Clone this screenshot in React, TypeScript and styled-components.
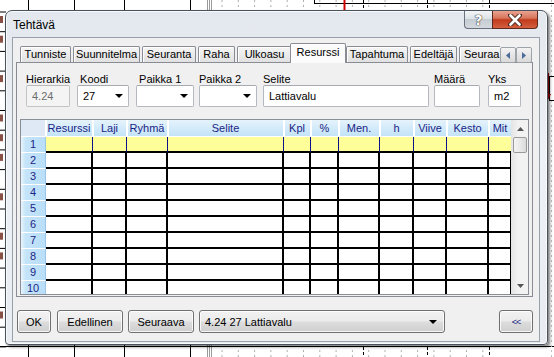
import React from 'react';
import styled, { createGlobalStyle } from 'styled-components';

const GlobalStyle = createGlobalStyle`
  html, body {
    margin: 0;
    padding: 0;
  }
  body {
    width: 554px;
    height: 357px;
    overflow: hidden;
    font-family: "Liberation Sans", Arial, sans-serif;
    font-size: 11px;
    color: #000;
  }
`;

const Desktop = styled.div`
  position: relative;
  width: 554px;
  height: 357px;
  background: #fff;
  overflow: hidden;
`;

const Backdrop = styled.svg`
  position: absolute;
  left: 0;
  top: 0;
`;

const Window = styled.div`
  position: absolute;
  left: 5px;
  top: 10px;
  width: 543px;
  height: 335px;
  box-sizing: border-box;
  border: 1px solid #4a525b;
  border-radius: 7px 7px 4px 4px;
  background: linear-gradient(180deg, #e3e8ee 0%, #eef1f5 45%, #e8ecf1 100%);
  box-shadow: 2px 2px 3px rgba(0, 0, 0, 0.5), inset 0 0 0 1px rgba(255, 255, 255, 0.75);
  padding: 0 7px 2px 6px;
  display: flex;
  flex-direction: column;
`;

const TitleBar = styled.div`
  height: 26px;
  display: flex;
  align-items: flex-start;
`;

const Title = styled.div`
  flex: 1;
  padding: 7px 0 0 1px;
  font-size: 12px;
  line-height: 14px;
`;

const CaptionButtons = styled.div`
  display: flex;
  margin-right: 2px;
`;

const HelpButton = styled.div`
  width: 28px;
  height: 18px;
  box-sizing: border-box;
  border: 1px solid #68717c;
  border-top: none;
  border-right: none;
  border-radius: 0 0 0 4px;
  background: linear-gradient(180deg, #f3f5f7 0%, #dde2e7 45%, #c6ccd3 50%, #d4d9df 100%);
  display: flex;
  align-items: center;
  justify-content: center;
  font: bold 14px "DejaVu Sans", sans-serif;
  color: #fff;
  text-shadow: 0 0 1px #444, 0 0 1px #444, 0 0 1px #444;
`;

const CloseButton = styled.div`
  width: 46px;
  height: 18px;
  box-sizing: border-box;
  border: 1px solid #5e2a1f;
  border-top: none;
  border-radius: 0 0 4px 0;
  background: linear-gradient(180deg, #e9a28f 0%, #d7765c 42%, #c23a1d 52%, #d3603f 100%);
  display: flex;
  align-items: center;
  justify-content: center;
`;

const Client = styled.div`
  flex: 1;
  border: 1px solid #98a1ab;
  background: #f0f0f0;
  display: flex;
  flex-direction: column;
  padding: 5px 6px 0 3px;
`;

const TabStrip = styled.div`
  display: flex;
  height: 20px;
  margin-left: 4px;
  position: relative;
  z-index: 1;
`;

const TabViewport = styled.div`
  width: 480px;
  height: 20px;
  overflow: hidden;
  display: flex;
  align-items: flex-start;
`;

const Tab = styled.div<{ $w: number; $ml: number; $active?: boolean; $clipped?: boolean }>`
  flex: 0 0 ${(p) => p.$w}px;
  margin-left: ${(p) => p.$ml}px;
  box-sizing: border-box;
  height: ${(p) => (p.$active ? 20 : 16)}px;
  margin-top: ${(p) => (p.$active ? 0 : 3)}px;
  border: 1px solid #898c95;
  border-bottom: none;
  border-radius: 2px 2px 0 0;
  background: ${(p) =>
    p.$active ? '#fbfbfb' : 'linear-gradient(180deg, #f6f6f6 0%, #ebebeb 50%, #e1e1e1 100%)'};
  box-shadow: inset 1px 1px 0 #fff;
  text-align: ${(p) => (p.$clipped ? 'left' : 'center')};
  padding-left: ${(p) => (p.$clipped ? 4 : 0)}px;
  line-height: ${(p) => (p.$active ? 17 : 15)}px;
  white-space: nowrap;
  position: relative;
  z-index: ${(p) => (p.$active ? 2 : 1)};
`;

const TabArrows = styled.div`
  display: flex;
  margin-top: 4px;
`;

const ArrowButton = styled.div`
  width: 16px;
  height: 16px;
  box-sizing: border-box;
  border: 1px solid #9ea3a9;
  border-radius: 2px;
  background: linear-gradient(180deg, #f4f4f4 0%, #e6e6e6 50%, #dadada 100%);
  display: flex;
  align-items: center;
  justify-content: center;
`;

const Panel = styled.div`
  margin-top: -1px;
  width: 517px;
  height: 235px;
  box-sizing: border-box;
  border: 1px solid #898c95;
  background: #f0f0f0;
  display: flex;
  flex-direction: column;
  padding: 10px 0 0 3px;
`;

const FieldsRow = styled.div`
  display: flex;
  margin-left: 6px;
`;

const Field = styled.div<{ $w: number; $ml: number }>`
  width: ${(p) => p.$w}px;
  margin-left: ${(p) => p.$ml}px;
  display: flex;
  flex-direction: column;
`;

const Label = styled.div`
  height: 12px;
  line-height: 12px;
  white-space: nowrap;
`;

const Box = styled.div<{ $disabled?: boolean }>`
  height: 22px;
  box-sizing: border-box;
  border: 1px solid ${(p) => (p.$disabled ? '#c4c4c4' : '#b5b8bf')};
  border-top-color: ${(p) => (p.$disabled ? '#b9b9b9' : '#a6a9b0')};
  border-radius: 2px;
  background: ${(p) => (p.$disabled ? '#f4f4f4' : '#fff')};
  color: ${(p) => (p.$disabled ? '#6d6d6d' : '#000')};
  padding: 0 5px;
  line-height: 20px;
  display: flex;
  align-items: center;
  justify-content: space-between;
`;

const DownTriangle = styled.span`
  width: 0;
  height: 0;
  border-left: 4px solid transparent;
  border-right: 4px solid transparent;
  border-top: 4px solid #000;
`;

const GridBox = styled.div`
  margin-top: 12px;
  width: 509px;
  height: 176px;
  box-sizing: border-box;
  border: 1px solid #8a8f97;
  display: flex;
  background: #fff;
`;

const GridTable = styled.div`
  width: 491px;
  height: 174px;
  overflow: hidden;
  display: grid;
  grid-template-columns: 25px 47px 34px 41px 116px 27px 28px 41px 34px 33px 42px 23px;
  grid-auto-rows: 16px;
  grid-template-rows: 17px;
`;

const CornerCell = styled.div`
  background: #dfe9f5;
  border-right: 1px solid #fff;
  border-bottom: 1px solid #fff;
`;

const HeadCell = styled.div`
  background: linear-gradient(180deg, #e6f3fc 0%, #d3ebfa 50%, #c4e3f8 100%);
  border-right: 1px solid #fff;
  border-bottom: 1px solid #fff;
  box-shadow: inset 1px 0 0 #fff;
  color: #1b2585;
  text-align: center;
  line-height: 16px;
  white-space: nowrap;
  overflow: hidden;
`;

const RowHead = styled.div`
  background: linear-gradient(90deg, #e8f5fd 0%, #c4e4f9 20%, #b9def8 100%);
  border-bottom: 1px solid #fff;
  border-right: 1px solid #9cc6e6;
  color: #1b2585;
  text-align: center;
  line-height: 15px;
`;

const Cell = styled.div<{ $current?: boolean }>`
  box-sizing: border-box;
  background: ${(p) => (p.$current ? '#ffff99' : '#fff')};
  border-right: ${(p) => (p.$current ? '1px solid #10108a' : '2px solid #000')};
  border-bottom: 2px solid #000;
`;

const ScrollBar = styled.div`
  width: 16px;
  height: 174px;
  background: linear-gradient(90deg, #e6e6e6 0%, #f2f2f2 40%, #f2f2f2 100%);
  border-left: 1px solid #e4e4e4;
  display: flex;
  flex-direction: column;
  align-items: center;
`;

const ScrollArrow = styled.div`
  height: 17px;
  display: flex;
  align-items: center;
  justify-content: center;
`;

const Thumb = styled.div`
  width: 14px;
  height: 16px;
  box-sizing: border-box;
  border: 1px solid #9a9a9a;
  border-radius: 2px;
  background: linear-gradient(90deg, #f4f4f4 0%, #e9e9e9 50%, #dadada 100%);
`;

const Track = styled.div`
  flex: 1;
`;

const ButtonRow = styled.div`
  display: flex;
  margin-top: 13px;
  padding-left: 1px;
`;

const Button = styled.div<{ $w: number; $ml?: number }>`
  width: ${(p) => p.$w}px;
  margin-left: ${(p) => p.$ml ?? 0}px;
  height: 23px;
  box-sizing: border-box;
  border: 1px solid #707070;
  border-radius: 3px;
  background: linear-gradient(180deg, #f2f2f2 0%, #ebebeb 49%, #dddddd 51%, #cfcfcf 100%);
  box-shadow: inset 0 0 0 1px rgba(255, 255, 255, 0.8);
  display: flex;
  align-items: center;
  justify-content: center;
  white-space: nowrap;
`;

const DropList = styled(Button)`
  justify-content: space-between;
  padding: 0 7px 0 5px;
`;

const Spacer = styled.div`
  flex: 1;
`;

const BackText = styled.span`
  font-size: 9px;
  color: #1b2585;
  letter-spacing: -1px;
`;

const tabs = [
  { t: 'Tunniste', w: 51, ml: 0 },
  { t: 'Suunnitelma', w: 67, ml: 2 },
  { t: 'Seuranta', w: 54, ml: 2 },
  { t: 'Raha', w: 37, ml: 2 },
  { t: 'Ulkoasu', w: 55, ml: 2 },
  { t: 'Resurssi', w: 56, ml: -2, active: true },
  { t: 'Tapahtuma', w: 62, ml: 0 },
  { t: 'Edeltäjä', w: 47, ml: 2 },
  { t: 'Seuraa', w: 61, ml: 2, clipped: true },
];

const headers = ['Resurssi', 'Laji', 'Ryhmä', 'Selite', 'Kpl', '%', 'Men.', 'h', 'Viive', 'Kesto', 'Mit'];

// rivit jotka näkyvät ikkunan vasemmalla puolella
const markRows = [0, 1, 3, 5, 6, 7, 9, 11, 12, 15];

const Background = () => {
  const rows = Array.from({ length: 18 }, (_, i) => 12 + i * 19.7);
  const ticks = Array.from({ length: 17 }, (_, i) => 222 + i * 16.3);
  return (
    <Backdrop width={554} height={357}>
      {rows.map((y) => (
        <line key={y} x1={0} x2={6} y1={y} y2={y} stroke="#000" strokeWidth={1} />
      ))}
      {markRows.map((i) => (
        <rect key={`m${i}`} x={0} y={rows[i] + 4} width={3} height={7} fill="#6b2418" opacity={0.8} />
      ))}
      {[28, 74, 124, 190].map((x) => (
        <g key={x}>
          <line x1={x + 0.5} x2={x + 0.5} y1={0} y2={12} stroke="#000" />
          <line x1={x + 0.5} x2={x + 0.5} y1={344} y2={357} stroke="#000" />
        </g>
      ))}
      {[207, 209, 211].map((x) => (
        <g key={x}>
          <line x1={x + 0.5} x2={x + 0.5} y1={0} y2={12} stroke="#9a9a9a" />
          <line x1={x + 0.5} x2={x + 0.5} y1={344} y2={357} stroke="#9a9a9a" />
        </g>
      ))}
      {ticks.map((x) => (
        <g key={x}>
          <line x1={x} x2={x} y1={0} y2={10} stroke="#b0b0b0" strokeDasharray="2 3" />
          <line x1={x} x2={x} y1={350} y2={357} stroke="#b0b0b0" strokeDasharray="2 3" />
        </g>
      ))}
      {[363, 427, 489].map((x) => (
        <g key={`b${x}`}>
          <line x1={x + 0.5} x2={x + 0.5} y1={0} y2={10} stroke="#000" strokeDasharray="3 2" />
          <line x1={x + 0.5} x2={x + 0.5} y1={347} y2={357} stroke="#000" strokeDasharray="3 2" />
        </g>
      ))}
      <line x1={314} x2={554} y1={3.5} y2={3.5} stroke="#000" />
      <line x1={314.5} x2={314.5} y1={0} y2={4} stroke="#000" />
      <line x1={344.5} x2={344.5} y1={0} y2={11} stroke="#d00000" strokeWidth={2} />
      <line x1={0} x2={554} y1={346.5} y2={346.5} stroke="#000" />
      <line x1={551.5} x2={551.5} y1={0} y2={357} stroke="#c0c0c0" strokeDasharray="2 3" />
      <rect x={549.5} y={76.5} width={8} height={24} fill="#fff" stroke="#000" />
      <line x1={548} x2={548} y1={73} y2={95} stroke="#b00000" strokeWidth={2} />
      <polygon points="545,94 551,94 548,100" fill="#b00000" />
    </Backdrop>
  );
};

export default function App() {
  return (
    <Desktop>
      <GlobalStyle />
      <Background />
      <Window>
        <TitleBar>
          <Title>Tehtävä</Title>
          <CaptionButtons>
            <HelpButton>?</HelpButton>
            <CloseButton>
              <svg width="14" height="12" viewBox="0 0 14 12">
                <path d="M2 1 L12 11 M12 1 L2 11" stroke="#4a2a22" strokeWidth="4.5" strokeLinecap="round" />
                <path d="M2.5 1.5 L11.5 10.5 M11.5 1.5 L2.5 10.5" stroke="#fff" strokeWidth="2.6" strokeLinecap="round" />
              </svg>
            </CloseButton>
          </CaptionButtons>
        </TitleBar>
        <Client>
          <TabStrip>
            <TabViewport>
              {tabs.map((t) => (
                <Tab key={t.t} $w={t.w} $ml={t.ml} $active={t.active} $clipped={t.clipped}>
                  {t.t}
                </Tab>
              ))}
            </TabViewport>
            <TabArrows>
              <ArrowButton>
                <svg width="4" height="7" viewBox="0 0 4 7">
                  <polygon points="4,0 4,7 0,3.5" fill="#4d6b99" />
                </svg>
              </ArrowButton>
              <ArrowButton>
                <svg width="4" height="7" viewBox="0 0 4 7">
                  <polygon points="0,0 0,7 4,3.5" fill="#4d6b99" />
                </svg>
              </ArrowButton>
            </TabArrows>
          </TabStrip>
          <Panel>
            <FieldsRow>
              <Field $w={44} $ml={0}>
                <Label>Hierarkia</Label>
                <Box $disabled>4.24</Box>
              </Field>
              <Field $w={52} $ml={7}>
                <Label>&nbsp;Koodi</Label>
                <Box>
                  27
                  <DownTriangle />
                </Box>
              </Field>
              <Field $w={58} $ml={7}>
                <Label>&nbsp;Paikka 1</Label>
                <Box>
                  <span />
                  <DownTriangle />
                </Box>
              </Field>
              <Field $w={58} $ml={5}>
                <Label>Paikka 2</Label>
                <Box>
                  <span />
                  <DownTriangle />
                </Box>
              </Field>
              <Field $w={166} $ml={6}>
                <Label>Selite</Label>
                <Box>Lattiavalu</Box>
              </Field>
              <Field $w={46} $ml={5}>
                <Label>Määrä</Label>
                <Box />
              </Field>
              <Field $w={33} $ml={8}>
                <Label>Yks</Label>
                <Box>m2</Box>
              </Field>
            </FieldsRow>
            <GridBox>
              <GridTable>
                <CornerCell />
                {headers.map((h) => (
                  <HeadCell key={h}>{h}</HeadCell>
                ))}
                {Array.from({ length: 10 }, (_, r) => (
                  <React.Fragment key={r}>
                    <RowHead>{r + 1}</RowHead>
                    {headers.map((h) => (
                      <Cell key={h} $current={r === 0} />
                    ))}
                  </React.Fragment>
                ))}
              </GridTable>
              <ScrollBar>
                <ScrollArrow>
                  <svg width="7" height="4" viewBox="0 0 7 4">
                    <polygon points="0,4 7,4 3.5,0" fill="#555" />
                  </svg>
                </ScrollArrow>
                <Thumb />
                <Track />
                <ScrollArrow>
                  <svg width="7" height="4" viewBox="0 0 7 4">
                    <polygon points="0,0 7,0 3.5,4" fill="#555" />
                  </svg>
                </ScrollArrow>
              </ScrollBar>
            </GridBox>
          </Panel>
          <ButtonRow>
            <Button $w={34}>OK</Button>
            <Button $w={66} $ml={6}>
              Edellinen
            </Button>
            <Button $w={66} $ml={5}>
              Seuraava
            </Button>
            <DropList $w={246} $ml={5}>
              <span>4.24 27 Lattiavalu</span>
              <DownTriangle />
            </DropList>
            <Spacer />
            <Button $w={34}>
              <BackText>&lt;&lt;</BackText>
            </Button>
          </ButtonRow>
        </Client>
      </Window>
    </Desktop>
  );
}
